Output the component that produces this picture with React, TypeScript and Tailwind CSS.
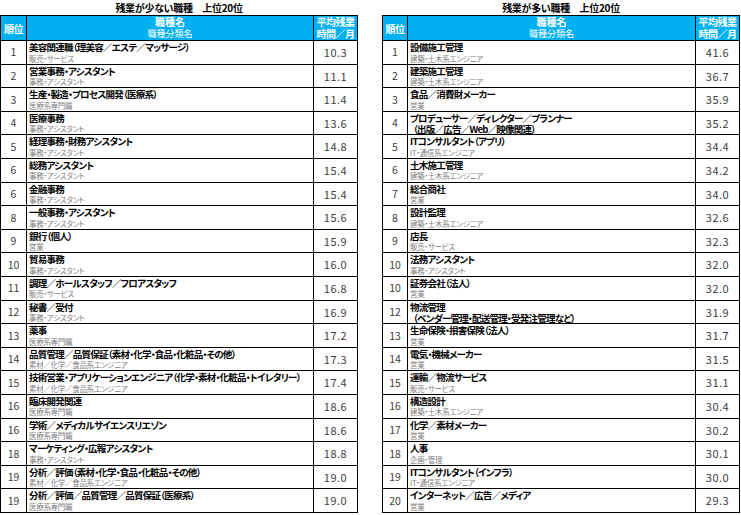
type Row = { rank: string; name: string; sub: string; value: string; subBold?: boolean };

const fewer: Row[] = [
  { rank: "1", name: "美容関連職（理美容／エステ／マッサージ）", sub: "販売・サービス", value: "10.3" },
  { rank: "2", name: "営業事務・アシスタント", sub: "事務・アシスタント", value: "11.1" },
  { rank: "3", name: "生産・製造・プロセス開発（医療系）", sub: "医療系専門職", value: "11.4" },
  { rank: "4", name: "医療事務", sub: "事務・アシスタント", value: "13.6" },
  { rank: "5", name: "経理事務・財務アシスタント", sub: "事務・アシスタント", value: "14.8" },
  { rank: "6", name: "総務アシスタント", sub: "事務・アシスタント", value: "15.4" },
  { rank: "6", name: "金融事務", sub: "事務・アシスタント", value: "15.4" },
  { rank: "8", name: "一般事務・アシスタント", sub: "事務・アシスタント", value: "15.6" },
  { rank: "9", name: "銀行（個人）", sub: "営業", value: "15.9" },
  { rank: "10", name: "貿易事務", sub: "事務・アシスタント", value: "16.0" },
  { rank: "11", name: "調理／ホールスタッフ／フロアスタッフ", sub: "販売・サービス", value: "16.8" },
  { rank: "12", name: "秘書／受付", sub: "事務・アシスタント", value: "16.9" },
  { rank: "13", name: "薬事", sub: "医療系専門職", value: "17.2" },
  { rank: "14", name: "品質管理／品質保証（素材・化学・食品・化粧品・その他）", sub: "素材／化学／食品系エンジニア", value: "17.3" },
  { rank: "15", name: "技術営業・アプリケーションエンジニア（化学・素材・化粧品・トイレタリー）", sub: "素材／化学／食品系エンジニア", value: "17.4" },
  { rank: "16", name: "臨床開発関連", sub: "医療系専門職", value: "18.6" },
  { rank: "16", name: "学術／メディカルサイエンスリエゾン", sub: "医療系専門職", value: "18.6" },
  { rank: "18", name: "マーケティング・広報アシスタント", sub: "事務・アシスタント", value: "18.8" },
  { rank: "19", name: "分析／評価（素材・化学・食品・化粧品・その他）", sub: "素材／化学／食品系エンジニア", value: "19.0" },
  { rank: "19", name: "分析／評価／品質管理／品質保証（医療系）", sub: "医療系専門職", value: "19.0" },
];

const more: Row[] = [
  { rank: "1", name: "設備施工管理", sub: "建築・土木系エンジニア", value: "41.6" },
  { rank: "2", name: "建築施工管理", sub: "建築・土木系エンジニア", value: "36.7" },
  { rank: "3", name: "食品／消費財メーカー", sub: "営業", value: "35.9" },
  { rank: "4", name: "プロデューサー／ディレクター／プランナー", sub: "（出版／広告／Web／映像関連）", value: "35.2", subBold: true },
  { rank: "5", name: "ITコンサルタント（アプリ）", sub: "IT・通信系エンジニア", value: "34.4" },
  { rank: "6", name: "土木施工管理", sub: "建築・土木系エンジニア", value: "34.2" },
  { rank: "7", name: "総合商社", sub: "営業", value: "34.0" },
  { rank: "8", name: "設計監理", sub: "建築・土木系エンジニア", value: "32.6" },
  { rank: "9", name: "店長", sub: "販売・サービス", value: "32.3" },
  { rank: "10", name: "法務アシスタント", sub: "事務・アシスタント", value: "32.0" },
  { rank: "10", name: "証券会社（法人）", sub: "営業", value: "32.0" },
  { rank: "12", name: "物流管理", sub: "（ベンダー管理・配送管理・受発注管理など）", value: "31.9", subBold: true },
  { rank: "13", name: "生命保険・損害保険（法人）", sub: "営業", value: "31.7" },
  { rank: "14", name: "電気・機械メーカー", sub: "営業", value: "31.5" },
  { rank: "15", name: "運輸／物流サービス", sub: "販売・サービス", value: "31.1" },
  { rank: "16", name: "構造設計", sub: "建築・土木系エンジニア", value: "30.4" },
  { rank: "17", name: "化学／素材メーカー", sub: "営業", value: "30.2" },
  { rank: "18", name: "人事", sub: "企画・管理", value: "30.1" },
  { rank: "19", name: "ITコンサルタント（インフラ）", sub: "IT・通信系エンジニア", value: "30.0" },
  { rank: "20", name: "インターネット／広告／メディア", sub: "営業", value: "29.3" },
];

function RankTable({ title, rows, rankW }: { title: string; rows: Row[]; rankW: string }) {
  return (
    <div className="w-[358px] flex flex-col">
      <div className="h-[15px] text-center text-[10px] leading-[15px] font-bold text-black tracking-[-0.3px]">{title}</div>
      <div className="h-[498px] border border-black flex flex-col overflow-hidden">
        {/* header */}
        <div className="h-[25px] shrink-0 flex bg-[#00b0f0] text-white border-b border-black">
          <div className={`${rankW} shrink-0 border-r border-black flex items-center justify-center text-[10px] font-bold tracking-[-0.5px]`}>
            順位
          </div>
          <div className="flex-1 border-r border-black flex flex-col items-center justify-center leading-[12px]">
            <div className="text-[10px] font-bold">職種名</div>
            <div className="text-[9px]">職種分類名</div>
          </div>
          <div className="w-[43px] shrink-0 flex flex-col items-center justify-center text-[10px] font-bold leading-[12px] tracking-[-0.5px]">
            <div>平均残業</div>
            <div>時間／月</div>
          </div>
        </div>
        {/* rows */}
        <div className="flex-1 min-h-0 flex flex-col">
          {rows.map((r, i) => (
            <div
              key={i}
              className={`flex-1 min-h-0 flex overflow-hidden ${i < rows.length - 1 ? "border-b border-black" : ""}`}
            >
              <div className={`${rankW} shrink-0 border-r border-black flex items-center justify-center text-[10.5px] text-[#404040]`}>
                {r.rank}
              </div>
              <div className="flex-1 min-w-0 border-r border-black pl-[2px] pt-[1px] overflow-hidden">
                <div className="text-[9.5px] leading-[11.5px] font-bold text-black whitespace-nowrap tracking-[-0.75px]">
                  {r.name}
                </div>
                {r.subBold ? (
                  <div className="pl-[3px] text-[9.5px] leading-[10px] font-bold text-black whitespace-nowrap tracking-[-0.75px]">
                    {r.sub}
                  </div>
                ) : (
                  <div className="text-[7.5px] leading-[10px] text-[#808080] whitespace-nowrap tracking-[-0.3px]">
                    {r.sub}
                  </div>
                )}
              </div>
              <div className="w-[43px] shrink-0 flex items-center justify-center text-[11px] tracking-[0.5px] text-[#404040]">
                {r.value}
              </div>
            </div>
          ))}
        </div>
      </div>
    </div>
  );
}

export default function App() {
  return (
    <div className="w-[741px] h-[515px] bg-white flex gap-[24px] font-['Noto_Sans_CJK_JP',sans-serif] [font-feature-settings:'palt']">
      <RankTable title="残業が少ない職種　上位20位" rows={fewer} rankW="w-[26px]" />
      <RankTable title="残業が多い職種　上位20位" rows={more} rankW="w-[25px]" />
    </div>
  );
}
